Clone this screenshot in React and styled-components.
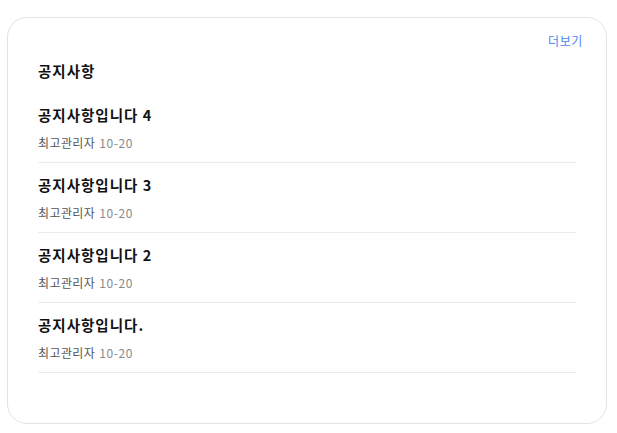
import React from "react";
import styled, { createGlobalStyle } from "styled-components";

const Global = createGlobalStyle`
  html, body { margin: 0; padding: 0; background: #fff; }
  body { font-family: "Noto Sans CJK KR", "Noto Sans", sans-serif; }
`;

const Card = styled.section`
  box-sizing: border-box;
  margin: 17px 0 0 7px;
  width: 600px;
  height: 407px;
  border: 1px solid #e3e3e3;
  border-radius: 20px;
  padding: 14px 30px 0 30px;
  background: #fff;
`;

const Header = styled.div`
  display: flex;
  justify-content: flex-end;
  margin-right: -7px;
`;

const More = styled.a`
  font-size: 12px;
  line-height: 18px;
  letter-spacing: 0.6px;
  color: #4d86f5;
  text-decoration: none;
  cursor: pointer;
`;

const Title = styled.h2`
  margin: 11px 0 12px;
  font-size: 14.5px;
  line-height: 20px;
  letter-spacing: 1px;
  font-weight: 700;
  color: #111;
`;

const List = styled.ul`
  list-style: none;
  margin: 0;
  padding: 0;
`;

const Item = styled.li`
  padding: 12px 0 10px;
  border-bottom: 1px solid #e7ecec;
`;

const ItemTitle = styled.div`
  font-size: 14.5px;
  line-height: 20px;
  letter-spacing: 1px;
  font-weight: 700;
  color: #111;
  margin-bottom: 9px;
`;

const Meta = styled.div`
  font-size: 12px;
  line-height: 18px;
  letter-spacing: 0.4px;
  color: #555;
`;

const DateText = styled.span`
  color: #8a8a8a;
  margin-left: 4px;
  letter-spacing: 0.6px;
`;

const items = [
  "공지사항입니다 4",
  "공지사항입니다 3",
  "공지사항입니다 2",
  "공지사항입니다.",
];

export default function App() {
  return (
    <>
      <Global />
      <Card>
        <Header>
          <More>더보기</More>
        </Header>
        <Title>공지사항</Title>
        <List>
          {items.map((t) => (
            <Item key={t}>
              <ItemTitle>{t}</ItemTitle>
              <Meta>
                최고관리자<DateText>10-20</DateText>
              </Meta>
            </Item>
          ))}
        </List>
      </Card>
    </>
  );
}
